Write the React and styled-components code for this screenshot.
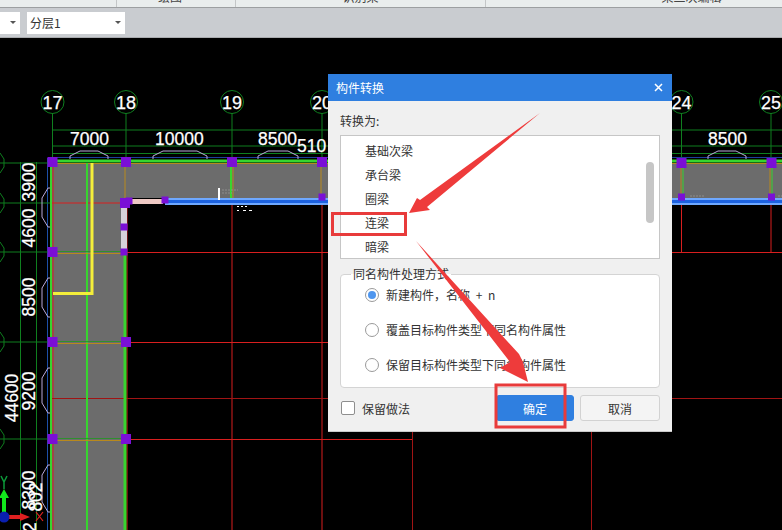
import React from "react";
import styled, { createGlobalStyle } from "styled-components";

const Global = createGlobalStyle`
  html, body { margin: 0; padding: 0; background: #000; }
  body { width: 782px; height: 530px; overflow: hidden; font-family: "Noto Sans CJK SC", "Liberation Sans", sans-serif; }
`;

const Page = styled.div`
  width: 782px;
  height: 530px;
  display: flex;
  flex-direction: column;
  overflow: hidden;
`;
const Ribbon = styled.div`
  height: 8px;
  box-sizing: border-box;
  flex: none;
  display: grid;
  grid-template-columns: 117px 119px 250px 1fr;
  background: #e9eded;
  border-bottom: 1px solid #9c9fa1;
  overflow: hidden;
`;
const RibbonGroup = styled.div`
  border-right: 1px solid #c3c6c7;
  font-size: 12px;
  line-height: 12px;
  margin-top: -9px;
  padding-left: ${(p) => p.$pl || 0}px;
  padding-right: ${(p) => p.$pr || 0}px;
  color: #444;
  text-align: center;
  &:last-child { border-right: none; }
`;
const Toolbar = styled.div`
  height: 30px;
  box-sizing: border-box;
  flex: none;
  display: flex;
  align-items: center;
  gap: 7px;
  background: #c9ccd0;
  border-bottom: 1px solid #a9abae;
`;
const Combo = styled.div`
  width: ${(p) => p.$w}px;
  height: 22px;
  box-sizing: border-box;
  background: #fff;
  display: flex;
  align-items: center;
  justify-content: space-between;
  padding: 0 4px 0 3px;
  font-size: 12px;
  color: #333;
`;
const Caret = styled.span`
  width: 0;
  height: 0;
  border-left: 3px solid transparent;
  border-right: 3px solid transparent;
  border-top: 3px solid #555;
`;
const Canvas = styled.div`
  flex: 1;
  position: relative;
  background: #000;
  overflow: hidden;
`;
const CadSvg = styled.svg`
  display: block;
  width: 782px;
  height: 492px;
  font-family: "Liberation Sans", sans-serif;
`;
const Overlay = styled.svg`
  position: absolute;
  left: 0;
  top: 0;
  width: 782px;
  height: 492px;
  pointer-events: none;
`;
const Dialog = styled.div`
  position: absolute;
  left: 328px;
  top: 36px;
  width: 344px;
  height: 358px;
  background: #f0f0f0;
  display: flex;
  flex-direction: column;
  border-bottom: 1px solid #c9c9c9;
  box-sizing: border-box;
  color: #333;
  font-size: 12px;
`;
const TitleBar = styled.div`
  height: 27px;
  box-sizing: border-box;
  flex: none;
  background: #2f7fe0;
  color: #fff;
  display: flex;
  align-items: center;
  justify-content: space-between;
  padding: 0 9px 1px 8px;
`;
const Close = styled.span`
  display: flex;
  color: #fff;
`;
const DialogBody = styled.div`
  flex: 1;
  display: flex;
  flex-direction: column;
  padding: 11px 12px 10px 12px;
`;
const FieldLabel = styled.div`
  height: 17px;
  line-height: 17px;
  margin-bottom: 6px;
`;
const ListBox = styled.div`
  height: 124px;
  box-sizing: border-box;
  background: #fff;
  border: 1px solid #c6c6c6;
  position: relative;
  overflow: hidden;
  padding-top: 3px;
`;
const ListItem = styled.div`
  height: 24px;
  line-height: 24px;
  padding-left: 24px;
`;
const ScrollThumb = styled.div`
  position: absolute;
  left: 305px;
  top: 26px;
  width: 8px;
  height: 61px;
  border-radius: 4px;
  background: #c6c6c6;
`;
const Group = styled.div`
  margin-top: 15px;
  height: 114px;
  box-sizing: border-box;
  background: #fff;
  border: 1px solid #d4d4d4;
  border-radius: 4px;
  position: relative;
  padding: 2px 0 0 24px;
`;
const Legend = styled.div`
  position: absolute;
  left: 10px;
  top: -9px;
  padding: 0 2px;
  line-height: 16px;
  background: linear-gradient(#f0f0f0 50%, #fff 50%);
`;
const RadioRow = styled.div`
  height: 35px;
  display: flex;
  align-items: center;
  gap: 7px;
  word-spacing: 3px;
`;
const Radio = styled.span`
  width: 14px;
  height: 14px;
  box-sizing: border-box;
  border-radius: 50%;
  border: 1px solid #9a9a9a;
  background: #fff;
  flex: none;
  display: flex;
  align-items: center;
  justify-content: center;
  &::after {
    content: "";
    width: 8px;
    height: 8px;
    border-radius: 50%;
    background: ${(p) => (p.$on ? "#4f96ee" : "transparent")};
  }
`;
const Footer = styled.div`
  display: flex;
  align-items: center;
  margin-top: 7px;
  height: 26px;
`;
const Check = styled.label`
  display: flex;
  align-items: center;
  gap: 7px;
  flex: 1;
  margin-left: 1px;
`;
const CheckBox = styled.span`
  width: 14px;
  height: 14px;
  box-sizing: border-box;
  background: #fff;
  border: 1px solid #8e8e8e;
  border-radius: 2px;
`;
const Button = styled.div`
  width: ${(p) => p.$w}px;
  height: 26px;
  margin-left: ${(p) => p.$ml || 0}px;
  box-sizing: border-box;
  border-radius: 3px;
  display: flex;
  align-items: center;
  justify-content: center;
  background: ${(p) => (p.$primary ? "#2f7fe0" : "#f4f4f4")};
  color: ${(p) => (p.$primary ? "#fff" : "#333")};
  border: 1px solid ${(p) => (p.$primary ? "#2f7fe0" : "#d2d2d2")};
`;

const GREEN = "#0f7f1f";
const RED = "#d81f1f";
const DARKRED = "#a01414";
const BRIGHT = "#37d52f";
const ORANGE = "#b8891d";
const Y0 = 38;

const columns = [
  [52.5, "17"],
  [126, "18"],
  [232, "19"],
  [322, "20"],
  [681.5, "24"],
  [771, "25"],
];

const spans = [
  [70, 145, "7000"],
  [155, 145, "10000"],
  [258, 145, "8500"],
  [297, 152, "510"],
  [708, 145, "8500"],
];

const vDims = [
  [35, 182, "3900"],
  [35, 228, "4600"],
  [35, 297, "8500"],
  [35, 391, "9200"],
  [18, 398, "44600"],
  [35, 490, "8300"],
  [42, 497, "802"],
  [36, 527, "2"],
];

const hBumps = [
  [70, 108],
  [153, 207],
  [258, 298],
  [708, 746],
];
const vBumps = [
  [188, 227],
  [278, 317],
  [368, 413],
  [465, 512],
];

const redV = [
  [127, 204, 530, RED],
  [232, 204, 530, RED],
  [322, 204, 530, RED],
  [681.5, 204, 252, RED],
  [771, 204, 252, RED],
  [412.5, 204, 530, DARKRED],
  [591.5, 204, 530, DARKRED],
];

const axisBands = [252, 342, 439];

const purple = [
  [52.5, 162],
  [126, 162],
  [232, 162],
  [322, 162],
  [681.5, 163],
  [771.5, 163],
  [52.5, 252],
  [52.5, 342],
  [126, 342],
  [52.5, 439],
  [126, 439],
  [125, 203],
];
const smallPurple = [
  [124, 227],
  [124, 252],
  [165, 200],
  [322, 197],
  [681.5, 197],
  [771.5, 197],
  [129, 201],
];

function Cad() {
  return (
    <CadSvg viewBox={`0 ${Y0} 782 492`}>
      <rect x="52" y="163" width="730" height="35" fill="#6c6c6c" />
      <rect x="52" y="163" width="74" height="367" fill="#6c6c6c" />

      {/* dimension lines */}
      {[130, 146, 153.5].map((y) => (
        <line key={y} x1="52" x2="782" y1={y} y2={y} stroke={GREEN} />
      ))}
      {columns.map(([x]) => (
        <line key={x} x1={x} x2={x} y1="113" y2="162" stroke={GREEN} />
      ))}
      <line x1="20.5" x2="20.5" y1="162" y2="530" stroke={GREEN} />
      <line x1="36.5" x2="36.5" y1="162" y2="530" stroke={GREEN} />
      <line x1="47.5" x2="47.5" y1="158" y2="530" stroke="#1d4fa8" />
      <line x1="48" x2="782" y1="157.5" y2="157.5" stroke="#1d3f9a" />
      {[163, 203, 252, 342, 439].map((y) => (
        <g key={y}>
          <line x1="0" x2="52" y1={y} y2={y} stroke={GREEN} />
          <path d={`M0 ${y - 10} L4 ${y - 4} V${y + 4} L0 ${y + 10}`} fill="none" stroke={GREEN} />
        </g>
      ))}

      {/* bumps */}
      {hBumps.map(([a, b]) => (
        <path
          key={a}
          d={`M${a} 159 V156 L${a + 10} 151 H${b - 10} L${b} 156 V159`}
          fill="none"
          stroke="#b9a9d9"
        />
      ))}
      {vBumps.map(([a, b]) => (
        <path
          key={a}
          d={`M50 ${a} H48 L42 ${a + 10} V${b - 10} L48 ${b} H50`}
          fill="none"
          stroke="#b9a9d9"
        />
      ))}

      {/* red axis lines */}
      {redV.map(([x, a, b, c]) => (
        <line key={x} x1={x} x2={x} y1={a} y2={b} stroke={c} />
      ))}
      <line x1="53" x2="53" y1="163" y2="530" stroke={RED} />
      <line x1="52" x2="122" y1="203" y2="203" stroke={RED} />
      <line x1="126" x2="782" y1="252.5" y2="252.5" stroke={RED} />
      <line x1="52" x2="782" y1="398.5" y2="398.5" stroke={DARKRED} />
      <line x1="126" x2="412" y1="342.5" y2="342.5" stroke={RED} />
      <line x1="126" x2="412" y1="439.5" y2="439.5" stroke={RED} />

      {/* wall / beam bands */}
      <line x1="50" x2="782" y1="161" y2="161" stroke={BRIGHT} strokeWidth="3" />
      <line x1="52" x2="782" y1="163.5" y2="163.5" stroke={ORANGE} />
      <line x1="51" x2="51" y1="161" y2="530" stroke={BRIGHT} strokeWidth="2" />
      <line x1="87" x2="87" y1="163" y2="530" stroke={BRIGHT} strokeWidth="2" />
      <line x1="125" x2="125" y1="252" y2="530" stroke={BRIGHT} strokeWidth="3" />
      <line x1="125" x2="125" y1="163" y2="198" stroke={ORANGE} />
      <line x1="231" x2="231" y1="163" y2="198" stroke={BRIGHT} strokeWidth="2" />
      <line x1="233" x2="233" y1="163" y2="198" stroke={ORANGE} />
      <line x1="321" x2="321" y1="163" y2="198" stroke={ORANGE} />
      <line x1="681" x2="681" y1="163" y2="198" stroke={ORANGE} />
      <line x1="683" x2="683" y1="163" y2="198" stroke={BRIGHT} />
      <line x1="770" x2="770" y1="163" y2="198" stroke={ORANGE} />
      <line x1="772" x2="772" y1="163" y2="198" stroke={BRIGHT} />
      {axisBands.map((y) => (
        <g key={y}>
          <line x1="52" x2="124" y1={y - 0.5} y2={y - 0.5} stroke="#2f8f2f" />
          <line x1="52" x2="124" y1={y + 1.5} y2={y + 1.5} stroke={ORANGE} />
        </g>
      ))}
      <path d="M92 163 V293.5 H53" fill="none" stroke="#f4ee3a" strokeWidth="3" />

      <rect x="121" y="205" width="6" height="47" fill="#d5d0d8" />
      <rect x="132" y="199" width="31" height="5" fill="#eec9c4" />
      <rect x="165" y="198" width="617" height="7" fill="#6ea8ff" />
      <rect x="167" y="200" width="615" height="3" fill="#1c62e0" />

      {purple.map(([x, y]) => (
        <rect key={`${x}-${y}`} x={x - 5} y={y - 5} width="10" height="10" fill="#7a0fd6" />
      ))}
      {smallPurple.map(([x, y]) => (
        <rect key={`${x}-${y}`} x={x - 3.5} y={y - 3.5} width="7" height="7" fill="#7a0fd6" />
      ))}

      {/* specks */}
      <rect x="218" y="188" width="2" height="12" fill="#fff" />
      <path d="M237 206.5h2M241 206.5h2M245 206.5h2M237 210.5h2M243 210.5h3M249 210.5h3" stroke="#fff" />
      <path d="M222 190h16M222 193h10" stroke="#8c8c8c" strokeDasharray="2 1" />
      <path d="M690 196h14M778 196h4" stroke="#8c8c8c" strokeDasharray="2 1" />

      {/* axis bubbles and dimension text */}
      {columns.map(([x, label]) => (
        <g key={label}>
          <circle cx={x} cy="102" r="11.5" fill="none" stroke={GREEN} />
          <text x={x} y="108.5" textAnchor="middle" fill="#fff" stroke="#fff" strokeWidth="0.25" fontSize="18">
            {label}
          </text>
        </g>
      ))}
      {spans.map(([x, y, t]) => (
        <text key={`${x}${t}`} x={x} y={y} fill="#fff" stroke="#fff" strokeWidth="0.25" fontSize="17.5">
          {t}
        </text>
      ))}
      {vDims.map(([x, y, t]) => (
        <text
          key={`${x}${y}`}
          x={x}
          y={y}
          fill="#fff"
          stroke="#fff"
          strokeWidth="0.25"
          fontSize="17.5"
          textAnchor="middle"
          transform={`rotate(-90 ${x} ${y})`}
        >
          {t}
        </text>
      ))}

      {/* UCS marker */}
      <path d="M1 476 L4 482 L7 476 M4 482 V489" fill="none" stroke="#0c9a3a" strokeWidth="1.5" />
      <path d="M4 489 L9 498 H6 V512 H2 V498 H-1 Z" fill="#12e81c" />
      <rect x="8" y="515" width="14" height="4" fill="#e02020" />
      <path d="M20 513 L30 517 L20 521 Z" fill="#e02020" />
      <circle cx="4" cy="517" r="5.5" fill="#0a1fb0" />
      <path d="M36 512 L43 521 M43 512 L36 521" stroke="#e02020" strokeWidth="1.2" />
    </CadSvg>
  );
}

function Arrow({ d }) {
  return <path d={d} fill="#ee3b3b" />;
}

export default function App() {
  return (
    <Page>
      <Global />
      <Ribbon>
        <RibbonGroup />
        <RibbonGroup $pr={12}>绘图</RibbonGroup>
        <RibbonGroup>识别梁</RibbonGroup>
        <RibbonGroup $pl={115}>梁二次编辑</RibbonGroup>
      </Ribbon>
      <Toolbar>
        <Combo $w={20}>
          <span />
          <Caret />
        </Combo>
        <Combo $w={98}>
          <span>分层1</span>
          <Caret />
        </Combo>
      </Toolbar>
      <Canvas>
        <Cad />
        <Dialog>
          <TitleBar>
            <span>构件转换</span>
            <Close>
              <svg width="9" height="9" viewBox="0 0 9 9">
                <path d="M1 1 L8 8 M8 1 L1 8" stroke="#fff" strokeWidth="1.5" />
              </svg>
            </Close>
          </TitleBar>
          <DialogBody>
            <FieldLabel>转换为:</FieldLabel>
            <ListBox>
              <ListItem>基础次梁</ListItem>
              <ListItem>承台梁</ListItem>
              <ListItem>圈梁</ListItem>
              <ListItem>连梁</ListItem>
              <ListItem>暗梁</ListItem>
              <ScrollThumb />
            </ListBox>
            <Group>
              <Legend>同名构件处理方式</Legend>
              <RadioRow>
                <Radio $on />
                新建构件，名称 + n
              </RadioRow>
              <RadioRow>
                <Radio />
                覆盖目标构件类型下同名构件属性
              </RadioRow>
              <RadioRow>
                <Radio />
                保留目标构件类型下同名构件属性
              </RadioRow>
            </Group>
            <Footer>
              <Check>
                <CheckBox />
                保留做法
              </Check>
              <Button $primary $w={78}>确定</Button>
              <Button $w={80} $ml={6}>取消</Button>
            </Footer>
          </DialogBody>
        </Dialog>
        <Overlay viewBox={`0 ${Y0} 782 492`}>
          <rect x="332.5" y="213.5" width="73" height="21" fill="none" stroke="#e83b3b" strokeWidth="3" />
          <rect x="496" y="385" width="69" height="42" fill="none" stroke="#e83b3b" strokeWidth="3" />
          <Arrow d="M540 113 L427 207 L430 210 L409 213 L417 198 L420 200 Z" />
          <Arrow d="M416 241 L519 354 L523 362 L528 382 L500 368 L510 362 Z" />
        </Overlay>
      </Canvas>
    </Page>
  );
}
